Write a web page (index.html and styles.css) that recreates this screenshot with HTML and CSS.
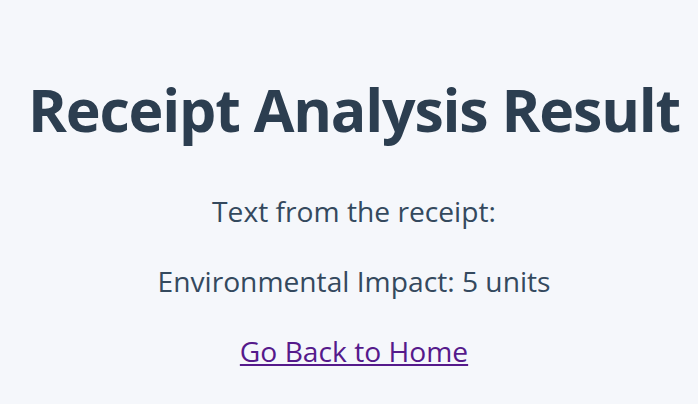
FILE: index.html
```
<!DOCTYPE html>
<html>
<head>
    <title>Receipt Analysis Result</title>
    <link rel="stylesheet" href="styles.css">
</head>
<body>
    <div class="result">
        <h1>Receipt Analysis Result</h1>
        <p>Text from the receipt:</p>
        <p>Environmental Impact: 5 units</p>
        <a href="#" class="back">Go Back to Home</a>
    </div>
</body>
</html>
```

FILE: styles.css
```
body {
    margin: 0;
    background-color: #f5f7fb;
    font-family: "Open Sans", "Noto Sans", sans-serif;
    color: #34495e;
}

.result {
    display: flex;
    flex-direction: column;
    align-items: center;
    padding: 74px 0 0 10px;
}

h1 {
    margin: 0 0 47px;
    font-size: 59px;
    font-weight: 700;
    letter-spacing: -1.2px;
    color: #2c3e50;
    line-height: 70px;
    white-space: nowrap;
}

p {
    margin: 0 0 30px;
    font-size: 28.2px;
    line-height: 40px;
}

.back {
    font-size: 28.2px;
    line-height: 40px;
    color: #551a8b;
}
```
